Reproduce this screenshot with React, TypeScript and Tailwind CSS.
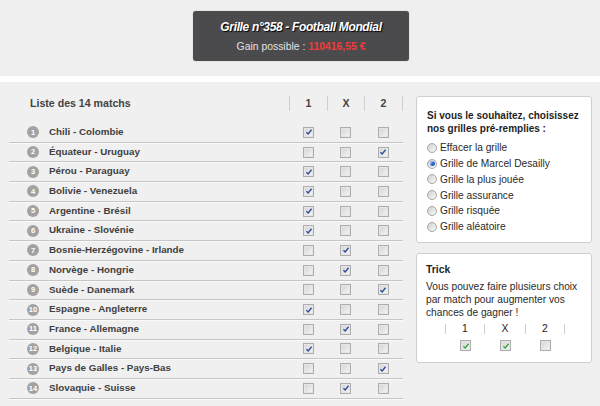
import React from "react";

type Pick = 0 | 1 | 2;

const MATCHES: [string, Pick][] = [
  ["Chili - Colombie", 0],
  ["Équateur - Uruguay", 2],
  ["Pérou - Paraguay", 0],
  ["Bolivie - Venezuela", 0],
  ["Argentine - Brésil", 0],
  ["Ukraine - Slovénie", 0],
  ["Bosnie-Herzégovine - Irlande", 1],
  ["Norvège - Hongrie", 1],
  ["Suède - Danemark", 2],
  ["Espagne - Angleterre", 0],
  ["France - Allemagne", 1],
  ["Belgique - Italie", 0],
  ["Pays de Galles - Pays-Bas", 2],
  ["Slovaquie - Suisse", 1],
];

const PRESETS = [
  "Effacer la grille",
  "Grille de Marcel Desailly",
  "Grille la plus jouée",
  "Grille assurance",
  "Grille risquée",
  "Grille aléatoire",
];

function Checkbox({ checked, green }: { checked?: boolean; green?: boolean }) {
  return (
    <span className="inline-flex h-[11px] w-[11px] items-center justify-center border border-[#adadad] bg-gradient-to-br from-[#d3d3d3] to-[#f7f7f7] shadow-[inset_0_0_0_1px_#e6e6e6]">
      {checked && (
        <svg viewBox="0 0 10 10" className="h-[8px] w-[8px]">
          <path
            d="M1.8 5.2 L4 7.4 L8.2 2.2"
            fill="none"
            stroke={green ? "#35a535" : "#2b4c9e"}
            strokeWidth="1.7"
          />
        </svg>
      )}
    </span>
  );
}

function Radio({ on }: { on?: boolean }) {
  return (
    <span className="inline-flex h-[10px] w-[10px] items-center justify-center rounded-full border border-[#a6a6a6] bg-gradient-to-br from-[#cfcfcf] to-[#fbfbfb]">
      {on && <span className="h-[5px] w-[5px] rounded-full bg-[#2a5fc4] shadow-[inset_1px_1px_1px_#9cc2ff]" />}
    </span>
  );
}

const Sep = ({ h = "h-[15px]" }: { h?: string }) => <span className={`w-px ${h} bg-[#cfcfcf]`} />;

export default function App() {
  return (
    <div className="h-[406px] w-[600px] overflow-hidden bg-[#f0f0f0] font-['Liberation_Sans',Arial,sans-serif]">
      {/* top band */}
      <div className="flex h-[76px] justify-center bg-[#efefef] pt-[11px] pl-[2px]">
        <div className="flex h-[50px] w-[216px] flex-col items-center rounded-[3px] bg-[#4b4b4d] pt-[9px] shadow-[0_0_1px_#999]">
          <div className="text-[12px] leading-[15px] font-bold italic tracking-[-0.35px] text-white [text-shadow:1px_1px_1px_#000]">
            Grille n°358 - Football Mondial
          </div>
          <div className="mt-[5px] text-[10.4px] leading-[13px] text-[#e2e2e2]">
            Gain possible : <span className="font-bold text-[#f23a3a]">110416,55 €</span>
          </div>
        </div>
      </div>
      <div className="h-[6px] bg-white" />

      <div className="flex pt-[9px]">
        {/* match list */}
        <div className="ml-[9px] w-[394px]">
          <div className="flex h-[25px] items-center text-[10.6px] font-bold text-[#444]">
            <div className="w-[280px] pl-[21px]">Liste des 14 matchs</div>
            <Sep />
            <div className="w-[37px] text-center">1</div>
            <Sep />
            <div className="w-[36px] text-center">X</div>
            <Sep />
            <div className="w-[37px] text-center">2</div>
            <Sep />
          </div>
          <div className="mt-[7px]">
            {MATCHES.map(([name, pick], i) => (
              <div
                key={name}
                className="flex h-[19.7px] items-center border-b border-[#c6c6c6] shadow-[0_1px_0_#fafafa]"
              >
                <div className="flex w-[281px] items-center pl-[18px]">
                  <span className="flex h-[12px] w-[12px] items-center justify-center rounded-full bg-[#a2a2a2] text-[7.5px] leading-none font-bold text-white">
                    {i + 1}
                  </span>
                  <span className="ml-[10px] text-[9.8px] font-bold text-[#404040]">{name}</span>
                </div>
                <div className="flex w-[37px] justify-center">
                  <Checkbox checked={pick === 0} />
                </div>
                <div className="flex w-[37px] justify-center">
                  <Checkbox checked={pick === 1} />
                </div>
                <div className="flex w-[38px] justify-center">
                  <Checkbox checked={pick === 2} />
                </div>
              </div>
            ))}
          </div>
        </div>

        {/* side panels */}
        <div className="ml-[13px] w-[176px]">
          <div className="mt-[5px] h-[147px] rounded-[3px] border border-[#cfcfcf] bg-white pt-[12px] pl-[10px]">
            <div className="text-[10px] leading-[13px] font-bold text-[#1e1e1e]">
              Si vous le souhaitez, choisissez
              <br />
              nos grilles pré-remplies :
            </div>
            <div className="mt-[5px]">
              {PRESETS.map((p, i) => (
                <div key={p} className="flex h-[15.8px] items-center gap-[3px] text-[10.2px] text-[#2a2a2a]">
                  <Radio on={i === 1} />
                  <span>{p}</span>
                </div>
              ))}
            </div>
          </div>

          <div className="mt-[10px] h-[110px] rounded-[3px] border border-[#cfcfcf] bg-white pt-[9px] pl-[9px]">
            <div className="text-[10.4px] leading-[13px] font-bold text-[#1e1e1e]">Trick</div>
            <div className="mt-[4px] text-[10.2px] leading-[13px] text-[#2a2a2a]">
              Vous pouvez faire plusieurs choix
              <br />
              par match pour augmenter vos
              <br />
              chances de gagner !
            </div>
            <div className="mt-[3px] ml-[19px] flex h-[14px] items-center text-[10.4px] text-[#222]">
              <Sep h="h-[10px]" />
              <div className="w-[38px] text-center">1</div>
              <Sep h="h-[10px]" />
              <div className="w-[40px] text-center">X</div>
              <Sep h="h-[10px]" />
              <div className="w-[38px] text-center">2</div>
              <Sep h="h-[10px]" />
            </div>
            <div className="mt-[4px] ml-[20px] flex">
              <div className="flex w-[39px] justify-center">
                <Checkbox checked green />
              </div>
              <div className="flex w-[41px] justify-center">
                <Checkbox checked green />
              </div>
              <div className="flex w-[39px] justify-center">
                <Checkbox />
              </div>
            </div>
          </div>
        </div>
      </div>
    </div>
  );
}
